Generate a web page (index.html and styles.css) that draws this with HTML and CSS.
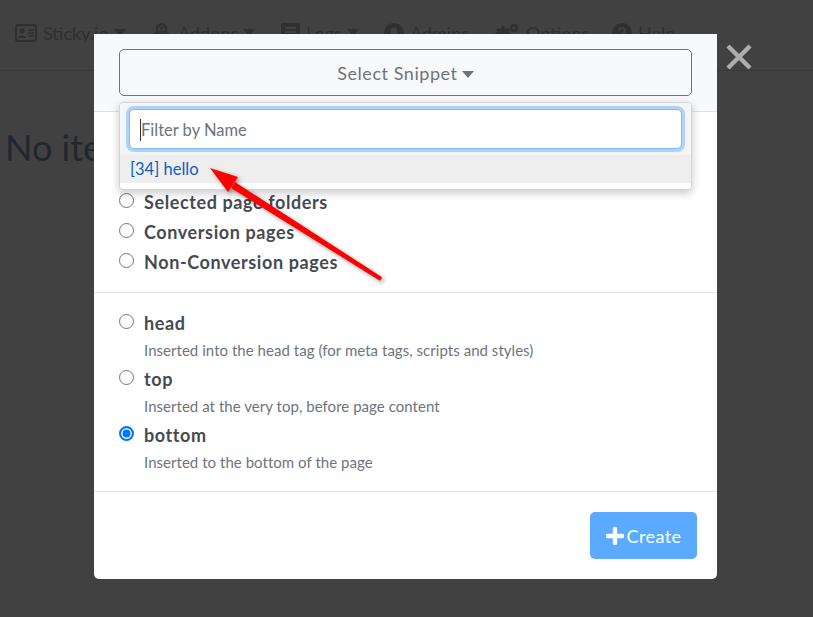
FILE: index.html
```html
<!DOCTYPE html>
<html lang="en">
<head>
  <meta charset="UTF-8" />
  <meta name="viewport" content="width=device-width, initial-scale=1.0"/>
  <title>Snippets</title>
  <link rel="stylesheet" href="styles.css">
</head>
<body>
  <nav class="navbar">
    <a class="nav-item nav-sticky">
      <svg class="nav-icon" width="22" height="18" viewBox="0 0 22 18"><rect x="1" y="1" width="20" height="16" rx="2" fill="none" stroke="currentColor" stroke-width="2"/><circle cx="7" cy="7" r="2.5" fill="currentColor"/><path d="M3 14c0-3 8-3 8 0z" fill="currentColor"/><path d="M13 6h6M13 9h6M13 12h6" stroke="currentColor" stroke-width="1.5"/></svg>
      Sticky.io <span class="caret"></span>
    </a>
    <a class="nav-item nav-addons">
      <svg class="nav-icon" width="21" height="19" viewBox="0 0 21 19"><path d="M10.5 1l4.5 2v5l-4.500 2-4.500-2V3zM6 3l4.500 2L15 3M10.500 5v5M5.500 10l4.500 2v4l-4.500 2L1 16v-4zM15.500 10l4.500 2v4l-4.500 2-4.500-2v-4z" fill="none" stroke="currentColor" stroke-width="1.800"/></svg>
      Addons <span class="caret"></span>
    </a>
    <a class="nav-item nav-logs">
      <svg class="nav-icon" width="19" height="20" viewBox="0 0 19 20"><path d="M2 0h15a2 2 0 0 1 2 2v11l-6 7H2a2 2 0 0 1-2-2V2a2 2 0 0 1 2-2z" fill="currentColor"/><path d="M4 5h11M4 9h11" stroke="#414141" stroke-width="2"/></svg>
      Logs <span class="caret"></span>
    </a>
    <a class="nav-item nav-admins">
      <svg class="nav-icon" width="20" height="20" viewBox="0 0 20 20"><circle cx="10" cy="10" r="10" fill="currentColor"/><circle cx="10" cy="8" r="3.500" fill="#414141"/><path d="M4 16c1-4 11-4 12 0-3 2.500-9 2.500-12 0z" fill="#414141"/></svg>
      Admins
    </a>
    <a class="nav-item nav-options">
      <svg class="nav-icon" width="26" height="20" viewBox="0 0 26 20"><circle cx="9" cy="12" r="4.500" fill="none" stroke="currentColor" stroke-width="5"/><path d="M9 3v18M0 12h18M3 6l12 12M15 6L3 18" stroke="currentColor" stroke-width="3"/><circle cx="20" cy="5" r="3" fill="none" stroke="currentColor" stroke-width="2.500"/></svg>
      Options
    </a>
    <a class="nav-item nav-help">
      <svg class="nav-icon" width="20" height="20" viewBox="0 0 20 20"><circle cx="10" cy="10" r="10" fill="currentColor"/><path d="M7 8c0-4 6-4 6 0 0 2-3 2-3 4" fill="none" stroke="#414141" stroke-width="2"/></svg>
      Help
    </a>
  </nav>

  <h2 class="empty">No items</h2>

  <div class="modal">
    <div class="modal-header">
      <button class="select-btn">Select Snippet <span class="caret"></span></button>
    </div>

    <div class="dropdown">
      <div class="filter-wrap">
        <div class="filter"><span class="text-cursor"></span>Filter by Name</div>
      </div>
      <a class="dropdown-item">[34] hello</a>
    </div>

    <div class="section section-pages">
      <label class="radio"><span class="dot"></span><b>Selected page folders</b></label>
      <label class="radio"><span class="dot"></span><b>Conversion pages</b></label>
      <label class="radio"><span class="dot"></span><b>Non-Conversion pages</b></label>
    </div>

    <div class="section section-place">
      <div class="option">
        <label class="radio"><span class="dot"></span><b>head</b></label>
        <p>Inserted into the head tag (for meta tags, scripts and styles)</p>
      </div>
      <div class="option">
        <label class="radio"><span class="dot"></span><b>top</b></label>
        <p>Inserted at the very top, before page content</p>
      </div>
      <div class="option">
        <label class="radio"><span class="dot checked"></span><b>bottom</b></label>
        <p>Inserted to the bottom of the page</p>
      </div>
    </div>

    <div class="modal-footer">
      <button class="create-btn">
        <svg width="18" height="18" viewBox="0 0 18 18"><path d="M9 2v14M2 9h14" stroke="#fff" stroke-width="4.400" stroke-linecap="round"/></svg>
        Create
      </button>
    </div>
  </div>

  <svg class="close-x" width="26" height="26" viewBox="0 0 26 26"><path d="M2 2l22 22M24 2L2 24" stroke="#adadad" stroke-width="4.400"/></svg>

  <svg class="arrow" width="190" height="130" viewBox="0 0 190 130">
    <path d="M34.900 22L182.100 117.300 179.900 120.700 31.100 28z" fill="#f00"/>
    <path d="M10 8L38 17 28 32z" fill="#f00"/>
  </svg>
</body>
</html>
```

FILE: styles.css
```css
* {
  box-sizing: border-box;
}

body {
  margin: 0;
  height: 617px;
  overflow: hidden;
  background: #414141;
  font-family: 'Lato', sans-serif;
  font-size: 18px;
  color: #303030;
}

.navbar {
  height: 71px;
  display: flex;
  align-items: center;
  padding: 0 0 5px 15px;
  border-bottom: 1px solid #3a3a3a;
}

.nav-item {
  display: flex;
  align-items: center;
  gap: 6px;
  white-space: nowrap;
}

.nav-sticky { width: 136px; }
.nav-addons { width: 130px; }
.nav-logs { width: 103px; }
.nav-admins { width: 110px; }
.nav-options { width: 118px; }

.navbar .caret {
  border-top-color: #303030;
}

.caret {
  display: inline-block;
  width: 0;
  height: 0;
  margin-left: -1px;
  border-left: 6.5px solid transparent;
  border-right: 6.5px solid transparent;
  border-top: 7px solid #6c757d;
  vertical-align: middle;
}

.empty {
  margin: 54px 0 0 5px;
  font-size: 36px;
  font-weight: 400;
  color: #20282f;
}

.modal {
  position: absolute;
  left: 94px;
  top: 34px;
  width: 623px;
  height: 545px;
  background: #fff;
  border-radius: 0 0 5px 5px;
}

.modal-header {
  height: 78px;
  padding: 15px 25px 0;
  background: #f8f9fa;
  border-bottom: 1px solid #dee2e6;
}

.select-btn {
  display: block;
  width: 573px;
  height: 47px;
  background: transparent;
  border: 1px solid #6c757d;
  border-radius: 5px;
  color: #6c757d;
  font-family: inherit;
  font-size: 18px;
  letter-spacing: 0.55px;
}

.dropdown {
  position: absolute;
  left: 25px;
  top: 68px;
  width: 573px;
  height: 88px;
  background: #fff;
  border: 1px solid #d5d5d5;
  border-radius: 4px;
  box-shadow: 0 3px 10px rgba(0,0,0,0.22);
  z-index: 2;
}

.filter-wrap {
  height: 52px;
  padding: 6px 9px 0;
  background: #f5f5f5;
  border-radius: 4px 4px 0 0;
}

.filter {
  display: flex;
  align-items: center;
  height: 40px;
  background: #fff;
  border: 1px solid #80bdff;
  border-radius: 5px;
  box-shadow: 0 0 0 3px #aed2fb;
  padding: 2px 0 0 10px;
  color: #6c757d;
  font-size: 16.5px;
}

.text-cursor {
  width: 1px;
  height: 22px;
  background: #333;
}

.dropdown-item {
  display: block;
  height: 28px;
  line-height: 29px;
  padding-left: 10px;
  background: #eee;
  color: #0b5fc4;
  font-size: 16.5px;
}

.section {
  padding: 0 25px;
  border-bottom: 1px solid #dee2e6;
}

.section-pages {
  height: 181px;
  padding-top: 75px;
}

.section-pages .radio {
  height: 30px;
}

.radio {
  display: flex;
  align-items: center;
  gap: 10px;
  color: #454b52;
}

.radio b {
  font-weight: 700;
  letter-spacing: 0.6px;
}

.dot {
  width: 15px;
  height: 15px;
  margin-top: -3px;
  border: 1px solid #757575;
  border-radius: 50%;
  background: #fff;
}

.dot.checked {
  border: 2px solid #0075ff;
  box-shadow: inset 0 0 0 1.5px #fff;
  background: #0075ff;
}

.section-place {
  height: 199px;
  padding-top: 16px;
}

.option {
  height: 56px;
}

.option .radio {
  height: 28px;
}

.option p {
  margin: 0;
  padding-left: 25px;
  height: 28px;
  line-height: 26px;
  font-size: 15px;
  letter-spacing: 0.04px;
  color: #6c757d;
}

.modal-footer {
  display: flex;
  justify-content: flex-end;
  padding: 20px 20px 0 0;
}

.create-btn {
  display: flex;
  align-items: center;
  justify-content: center;
  gap: 3px;
  width: 107px;
  height: 47px;
  background: #5aabff;
  border: none;
  border-radius: 5px;
  color: #fff;
  font-family: inherit;
  font-size: 18px;
  letter-spacing: 0.4px;
}

.close-x {
  position: absolute;
  left: 726px;
  top: 44px;
}

.arrow {
  position: absolute;
  left: 200px;
  top: 160px;
  z-index: 3;
  filter: drop-shadow(2px 2px 2px rgba(0,0,0,0.4));
}
```
